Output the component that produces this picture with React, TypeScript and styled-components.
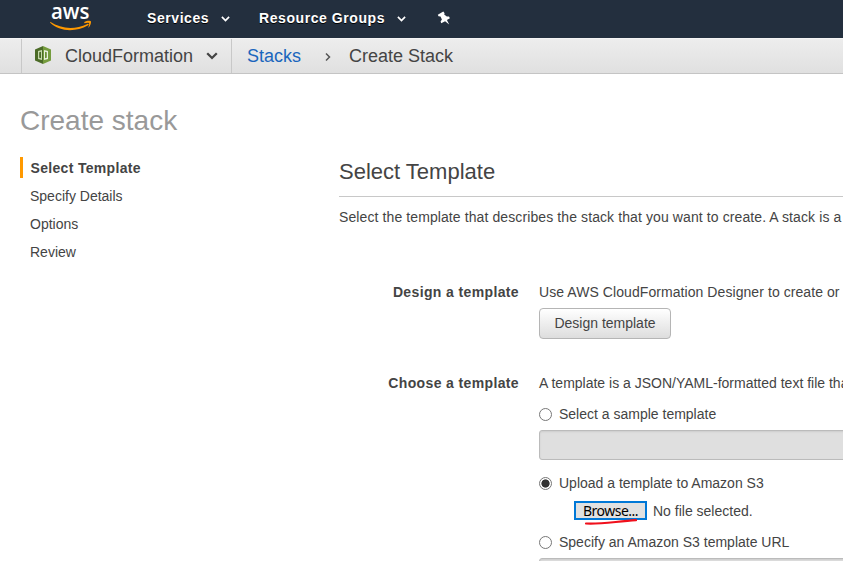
import React from "react";
import styled, { createGlobalStyle } from "styled-components";

const GlobalStyle = createGlobalStyle`
  * { box-sizing: border-box; }
  html, body { margin: 0; overflow: hidden; background: #fff; }
  body { font: 14px/20px "Liberation Sans", Arial, sans-serif; color: #444; }
`;

const Page = styled.div`
  width: 100%;
  height: 561px;
  overflow: hidden;
`;

const TopNav = styled.header`
  display: flex;
  align-items: center;
  height: 38px;
  padding-left: 50px;
  background: #232f3e;
`;

const Brand = styled.svg`
  width: 42px;
  height: 38px;
  margin-right: 55px;
  overflow: visible;
`;

const NavItem = styled.a<{ $width: number }>`
  display: flex;
  align-items: center;
  justify-content: space-between;
  width: ${(p) => p.$width}px;
  height: 36px;
  margin-right: 29px;
  align-self: flex-start;
  color: #fff;
  font-weight: bold;
  letter-spacing: 0.57px;
  text-shadow: 0 1px 0 #000;
  white-space: nowrap;

  svg {
    margin-top: 2px;
  }
`;

const Pin = styled.svg`
  width: 14px;
  height: 14px;
  margin-left: 2px;
  margin-top: -2px;
`;

const Crumbs = styled.nav`
  display: flex;
  height: 36px;
  padding-left: 21px;
  border-top: 1px solid #f4f4f4;
  border-bottom: 1px solid #c4c4c4;
  background: linear-gradient(#ededed, #e0e0e0);
  font-size: 18px;
  line-height: 34px;
`;

const ServiceMenu = styled.div`
  display: flex;
  align-items: center;
  width: 211px;
  padding-left: 12px;
  border-left: 1px solid #c8c8c8;
  border-right: 1px solid #c8c8c8;
`;

const ServiceIcon = styled.svg`
  width: 18px;
  height: 20px;
  margin-right: 13px;
  margin-top: -2px;
`;

const ServiceName = styled.span`
  width: 141px;
`;

const CrumbLink = styled.a`
  width: 76px;
  margin-left: 15px;
  color: #1a66bd;
`;

const CrumbArrow = styled.svg`
  width: 6px;
  height: 10px;
  margin: 13px 18px 0 2px;
`;

const PageTitle = styled.h1`
  margin: 29px 0 18px 20px;
  color: #999;
  font-size: 28px;
  font-weight: normal;
  line-height: 36px;
`;

const Columns = styled.div`
  display: grid;
  grid-template-columns: 319px 800px;
  padding-left: 20px;
`;

const Steps = styled.ul`
  display: flex;
  flex-direction: column;
  gap: 7px;
  margin: 0;
  padding: 0;
  list-style: none;
`;

const Step = styled.li<{ $active?: boolean }>`
  height: 21px;
  padding-left: ${(p) => (p.$active ? 7.5 : 10)}px;
  border-left: ${(p) => (p.$active ? "3px solid #ff9900" : "0")};
  font-weight: ${(p) => (p.$active ? "bold" : "normal")};
  letter-spacing: ${(p) => (p.$active ? "0.32px" : "0")};
  line-height: 23px;
`;

const Content = styled.main`
  white-space: nowrap;
`;

const SectionTitle = styled.h2`
  height: 40px;
  margin: 0 0 10px;
  border-bottom: 1px solid #c8c8c8;
  font-size: 22px;
  font-weight: normal;
  line-height: 29px;
`;

const Intro = styled.p`
  margin: 0 0 55px;
  letter-spacing: 0.1px;
`;

const Hint = styled.div<{ $spacing?: number }>`
  letter-spacing: ${(p) => p.$spacing ?? 0}px;
`;

const Field = styled.section<{ $gap?: number }>`
  display: grid;
  grid-template-columns: 180px 1fr;
  column-gap: 20px;
  margin-bottom: ${(p) => p.$gap ?? 0}px;
`;

const FieldLabel = styled.div`
  font-weight: bold;
  letter-spacing: 0.37px;
  text-align: right;
`;

const Button = styled.button`
  display: block;
  width: 132px;
  height: 31px;
  margin-top: 6px;
  padding: 0 0 2px;
  border: 1px solid #b5b5b5;
  border-radius: 4px;
  background: linear-gradient(#fff, #ddd);
  color: #444;
  font: inherit;
`;

const Choice = styled.label<{ $top: number }>`
  display: flex;
  align-items: center;
  height: 20px;
  margin-top: ${(p) => p.$top}px;
`;

const Radio = styled.input`
  appearance: none;
  width: 13px;
  height: 13px;
  margin: 0 7px 0 0;
  border: 1px solid #777;
  border-radius: 50%;
  background: #fff;
  &:checked {
    background: radial-gradient(circle, #333 3.7px, #fff 4.5px);
  }
`;

const TextBox = styled.div`
  height: 30px;
  margin-top: 6px;
  border: 1px solid #bbb;
  border-radius: 3px;
  background: #dfdfdf;
  box-shadow: inset 0 1px 2px #ccc;
`;

const FileRow = styled.div`
  display: flex;
  align-items: center;
  height: 20px;
  margin: 8px 0 0 35px;
`;

const BrowseWrap = styled.div`
  position: relative;
  margin: -2px 6px 0 0;
`;

const Browse = styled.button`
  display: block;
  width: 73px;
  height: 19px;
  padding: 1px 0 0;
  border: 2px solid #0078d7;
  background: #e1e1e1;
  color: #000;
  font: 14px/14px "Noto Sans", sans-serif;
  letter-spacing: -0.5px;
`;

const Underline = styled.svg`
  position: absolute;
  left: 10px;
  top: 16px;
  width: 58px;
  height: 9px;
`;

const Chevron = ({ color = "#fff", size = 9 }: { color?: string; size?: number }) => (
  <svg width={size} height={size * 0.6} viewBox="0 0 10 6" fill="none">
    <path d="M1 1l4 4 4-4" stroke={color} strokeWidth="1.9" />
  </svg>
);

export default function App() {
  return (
    <Page>
      <GlobalStyle />
      <TopNav>
        <Brand viewBox="0 0 42 38">
          <text x="1" y="18.500" fill="#fff" fontFamily="Open Sans" fontSize="21.500" fontWeight="600" textLength="38.500" lengthAdjust="spacingAndGlyphs">aws</text>
          <path d="M.2 21.800c11 7.200 24.500 8.200 37.200 2.100 1.400-.5 1.700.7.7 1.400C25.500 32.500 9.500 31.800.2 22.800z" fill="#f90" />
          <path d="M34.300 22.100c2.500-1.700 6.600-1.700 6.700-.5.2 1.900-.8 4.900-2.800 6.400.6-2.100 1.300-4 .9-4.700-.6-.8-3-.3-4.800 0z" fill="#f90" />
        </Brand>
        <NavItem $width={83}>Services<Chevron /></NavItem>
        <NavItem $width={147}>Resource Groups<Chevron /></NavItem>
        <Pin viewBox="0 0 14 14">
          <path d="M.8 3.700L6.300 .5 7.600 2.200 7.200 3.400 9.800 5.600 12 5.500 12.900 7.200 9.900 9 12.200 13.600 8.100 10.200 4.200 12.300 3.600 10.500 4.900 8.600 3.500 5.400 1.500 5.200z" fill="#fff" />
        </Pin>
      </TopNav>
      <Crumbs>
        <ServiceMenu>
          <ServiceIcon viewBox="0 0 18 20">
            <path d="M1 4.500L9 1v18l-8-3.500z" fill="#4b6b27" />
            <path d="M9 1l8 3.500v11L9 19z" fill="#759c3e" />
            <path d="M4 6l4-1v10l-4-1z" fill="#c5d8aa" />
            <path d="M5.200 7.200l1.800-.4v6.400l-1.800-.4z" fill="#4b6b27" />
            <path d="M10 5l4 1v8l-4 1z" fill="#e9f0dd" />
            <path d="M11 6.800l1.800.4v5.600l-1.800.4z" fill="#6b9136" />
          </ServiceIcon>
          <ServiceName>CloudFormation</ServiceName>
          <Chevron color="#444" size={12} />
        </ServiceMenu>
        <CrumbLink>Stacks</CrumbLink>
        <CrumbArrow viewBox="0 0 6 10" fill="none">
          <path d="M1 1.500L4.500 5 1 8.500" stroke="#555" strokeWidth="1.500" />
        </CrumbArrow>
        <span>Create Stack</span>
      </Crumbs>
      <PageTitle>Create stack</PageTitle>
      <Columns>
        <Steps>
          <Step $active>Select Template</Step>
          <Step>Specify Details</Step>
          <Step>Options</Step>
          <Step>Review</Step>
        </Steps>
        <Content>
          <SectionTitle>Select Template</SectionTitle>
          <Intro>Select the template that describes the stack that you want to create. A stack is a</Intro>
          <Field $gap={34}>
            <FieldLabel>Design a template</FieldLabel>
            <div>
              <Hint $spacing={0.07}>Use AWS CloudFormation Designer to create or</Hint>
              <Button>Design template</Button>
            </div>
          </Field>
          <Field>
            <FieldLabel>Choose a template</FieldLabel>
            <div>
              <Hint>A template is a JSON/YAML-formatted text file that</Hint>
              <Choice $top={11}><Radio type="radio" name="source" />Select a sample template</Choice>
              <TextBox />
              <Choice $top={13}><Radio type="radio" name="source" defaultChecked />Upload a template to Amazon S3</Choice>
              <FileRow>
                <BrowseWrap>
                  <Browse>Browse...</Browse>
                  <Underline viewBox="0 0 58 9" fill="none">
                    <path d="M2 6.500C15 7.500 32 4.500 52 3.200" stroke="#f0101c" strokeWidth="2.200" strokeLinecap="round" />
                  </Underline>
                </BrowseWrap>
                No file selected.
              </FileRow>
              <Choice $top={11}><Radio type="radio" name="source" />Specify an Amazon S3 template URL</Choice>
              <TextBox />
            </div>
          </Field>
        </Content>
      </Columns>
    </Page>
  );
}
